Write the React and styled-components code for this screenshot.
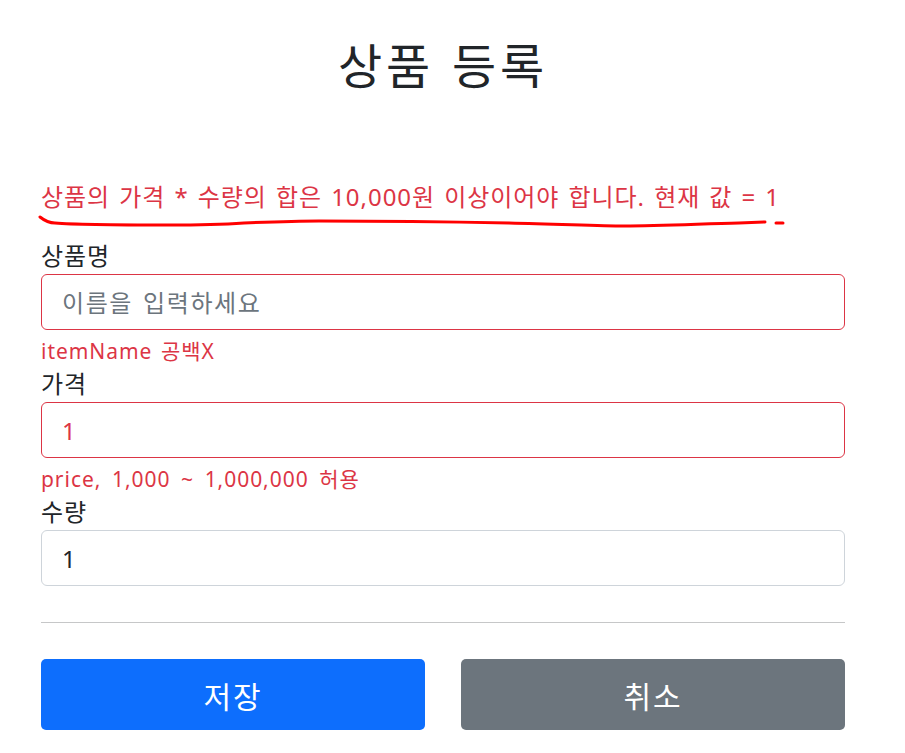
import React from 'react';
import styled, { createGlobalStyle } from 'styled-components';

const GlobalStyle = createGlobalStyle`
  html, body {
    margin: 0;
    padding: 0;
    background: #fff;
  }
  body {
    font-family: "Noto Sans", "Noto Sans CJK KR", sans-serif;
    color: #212529;
    letter-spacing: 0.06em;
    word-spacing: 0.12em;
  }
  * {
    box-sizing: border-box;
  }
`;

const Container = styled.div`
  width: 804px;
  margin-left: 41px;
  padding-bottom: 23px;
`;

const Header = styled.div`
  text-align: center;
  padding-top: 37px;
`;

const Title = styled.h2`
  margin: 0;
  font-size: 48px;
  font-weight: 400;
  line-height: 58px;
  letter-spacing: 0.08em;
`;

const GlobalError = styled.p`
  position: relative;
  margin: 84px 0 23px;
  font-size: 24px;
  line-height: 36px;
  color: #dc3545;
`;

// hand-drawn annotation under the global error
const Scribble = styled.svg`
  position: absolute;
  left: -2px;
  top: 34px;
  overflow: visible;
  pointer-events: none;
`;

const Label = styled.label`
  display: block;
  font-size: 24px;
  line-height: 36px;
`;

const Input = styled.input`
  display: block;
  width: 100%;
  height: 56px;
  padding: 0 20px;
  font-family: inherit;
  font-size: 24px;
  letter-spacing: 0.065em;
  word-spacing: 0.1em;
  color: ${(p) => (p.$invalid && p.$redText ? '#dc3545' : '#212529')};
  border: 1px solid ${(p) => (p.$invalid ? '#dc3545' : '#ced4da')};
  border-radius: 6px;
  outline: none;
  background: #fff;

  &::placeholder {
    color: #6c757d;
  }
`;

const Feedback = styled.div`
  margin-top: 6px;
  font-size: 21px;
  line-height: 30px;
  word-spacing: ${(p) => (p.$wide ? '0.2em' : '0.1em')};
  color: #dc3545;
`;

const Divider = styled.hr`
  margin: 36px 0;
  border: 0;
  border-top: 1px solid #c6c7c8;
`;

const ButtonRow = styled.div`
  display: grid;
  grid-template-columns: 1fr 1fr;
  gap: 36px;
`;

const Button = styled.button`
  height: 71px;
  border: 0;
  border-radius: 5px;
  font-family: inherit;
  font-size: 30px;
  letter-spacing: 0.06em;
  color: #fff;
  background: ${(p) => (p.$variant === 'secondary' ? '#6c757d' : '#0d6efd')};
  cursor: pointer;
`;

const fields = [
  { id: 'itemName', label: '상품명', placeholder: '이름을 입력하세요', value: '', error: 'itemName 공백X' },
  { id: 'price', label: '가격', value: '1', error: 'price, 1,000 ~ 1,000,000 허용', redText: true, wide: true },
  { id: 'quantity', label: '수량', value: '1' },
];

export default function App() {
  return (
    <>
      <GlobalStyle />
      <Container>
        <Header>
          <Title>상품 등록</Title>
        </Header>

        <GlobalError>
          상품의 가격 * 수량의 합은 10,000원 이상이어야 합니다. 현재 값 = 1
          <Scribble width="760" height="14" viewBox="0 0 760 14">
            <path
              d="M1 4 C6 8 10 10 16 10 C40 12 90 12 130 12 C170 12 190 11 205 10 C230 9 260 8 280 8 C340 8 420 9 470 10 C520 11 560 13 585 13 C620 13 660 11 700 10 L726 9"
              fill="none"
              stroke="#ff0000"
              strokeWidth="3"
              strokeLinecap="round"
            />
            <path d="M737 10 L744 10" stroke="#ff0000" strokeWidth="3" strokeLinecap="round" />
          </Scribble>
        </GlobalError>

        {fields.map((f) => (
          <div key={f.id}>
            <Label htmlFor={f.id}>{f.label}</Label>
            <Input
              id={f.id}
              defaultValue={f.value}
              placeholder={f.placeholder}
              $invalid={!!f.error}
              $redText={f.redText}
            />
            {f.error && <Feedback $wide={f.wide}>{f.error}</Feedback>}
          </div>
        ))}

        <Divider />

        <ButtonRow>
          <Button type="submit">저장</Button>
          <Button type="button" $variant="secondary">취소</Button>
        </ButtonRow>
      </Container>
    </>
  );
}
